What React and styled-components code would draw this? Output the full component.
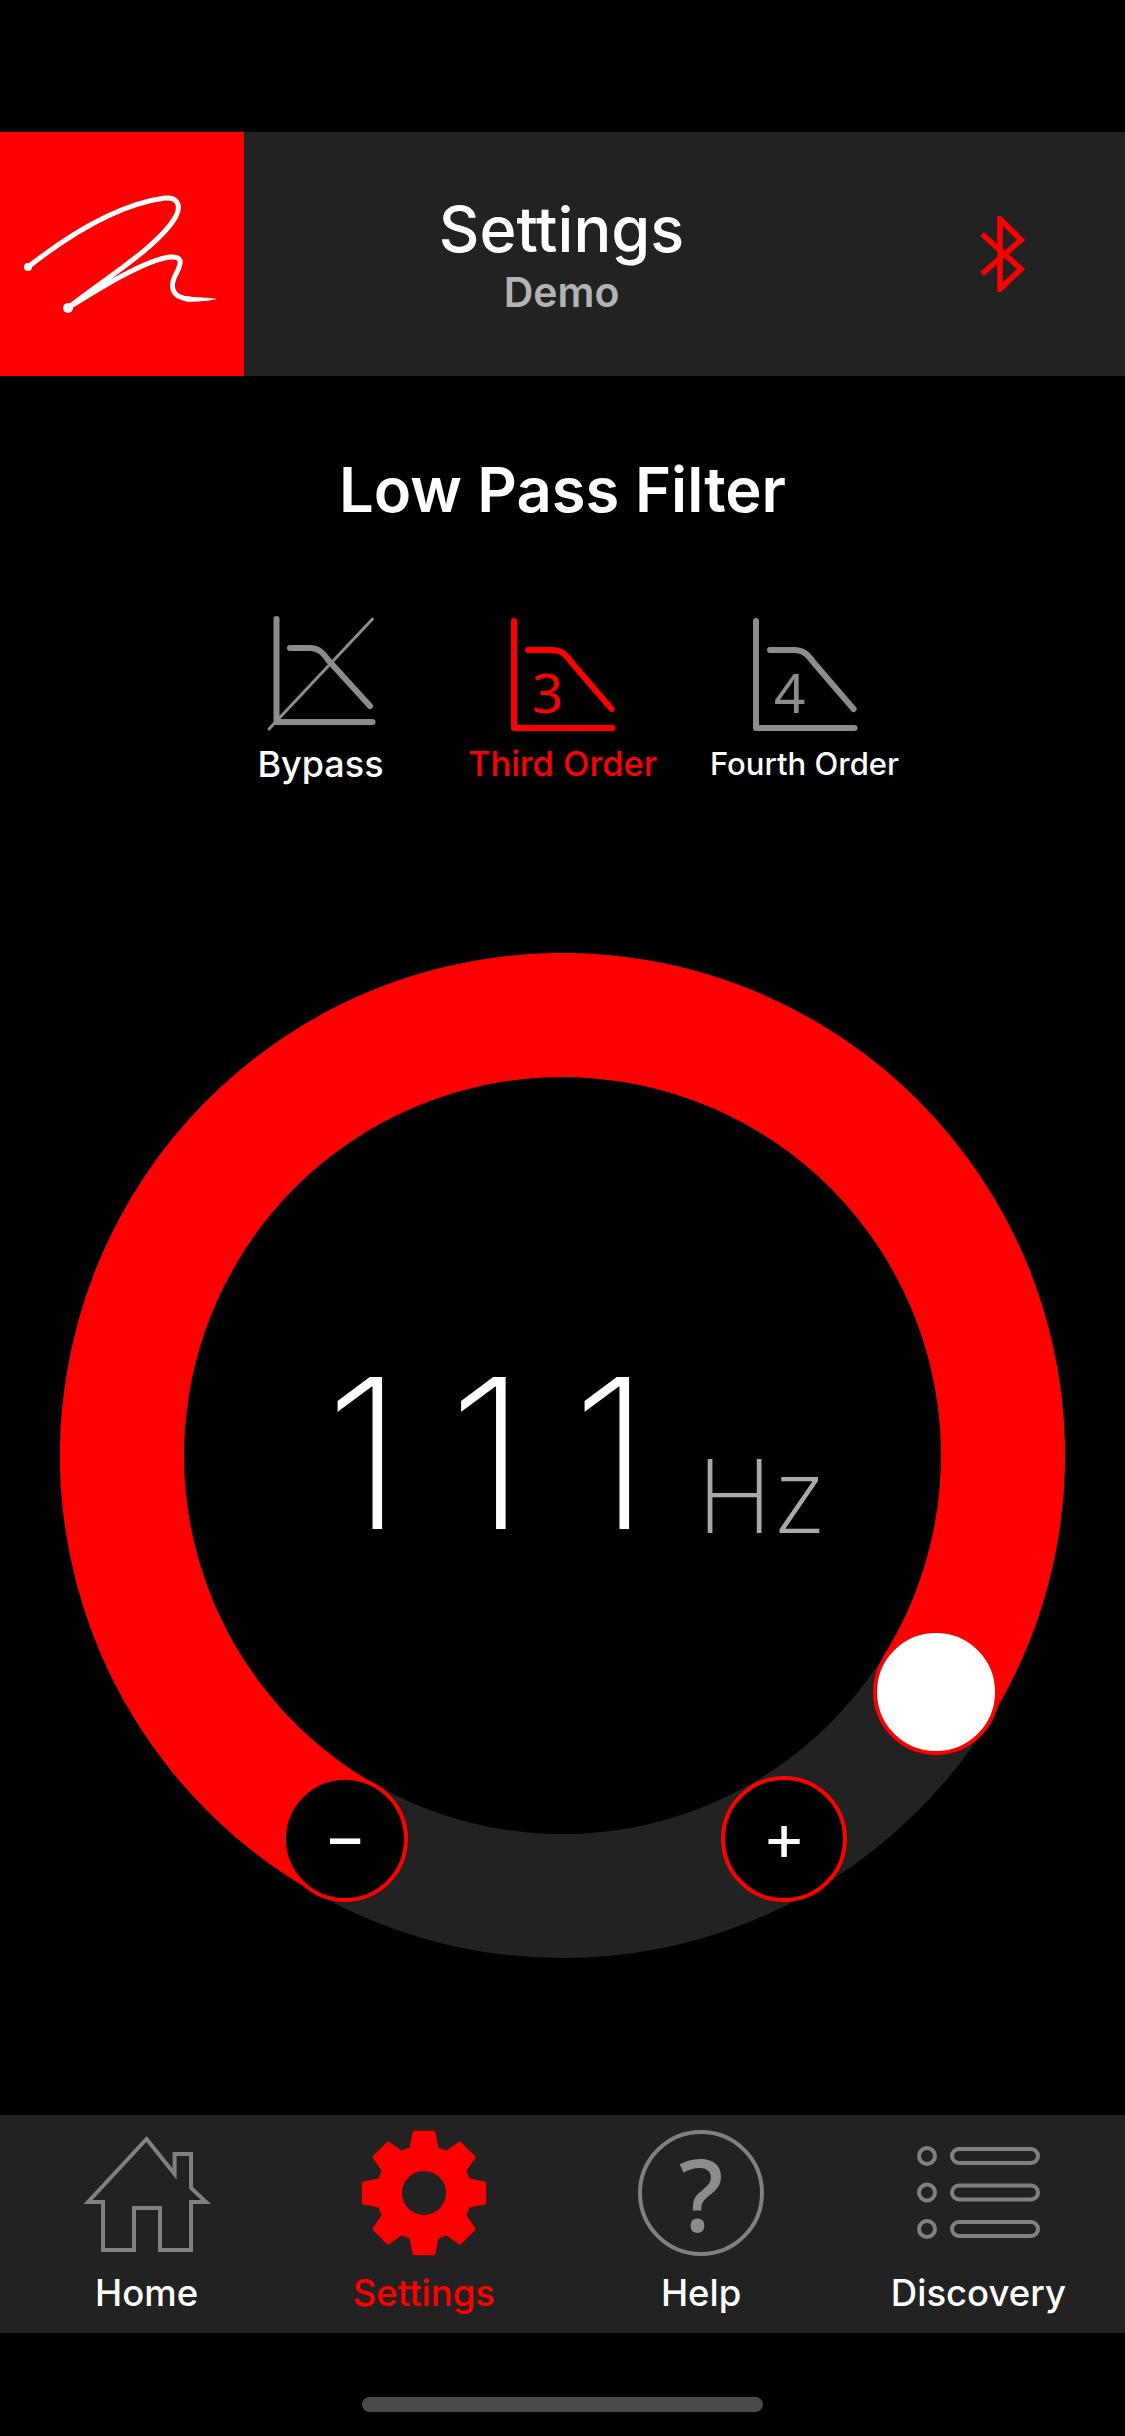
import styled, { createGlobalStyle } from "styled-components";

const RED = "#ff0000";
const BAR = "#222222";
const ICON_GREY = "#8c8c8c";

const GlobalStyle = createGlobalStyle`
  html, body {
    margin: 0;
    background: #000;
  }
  body {
    font-family: Inter, "Liberation Sans", sans-serif;
    color: #fff;
  }
`;

// clockwise from twelve o'clock
const polar = (c, r, deg) => {
  const a = (deg * Math.PI) / 180;
  return [c + r * Math.sin(a), c - r * Math.cos(a)];
};

const arcPath = (c, r, from, to) => {
  const [x1, y1] = polar(c, r, from);
  const [x2, y2] = polar(c, r, to);
  const sweep = (to - from + 360) % 360;
  return `M${x1} ${y1}A${r} ${r} 0 ${sweep > 180 ? 1 : 0} 1 ${x2} ${y2}`;
};

const gearPath = () => {
  const c = 64;
  let d = "";
  for (let i = 0; i < 8; i++) {
    const t = i * 45;
    const pts = [
      polar(c, 46, t - 16),
      polar(c, 61, t - 9),
      polar(c, 61, t + 9),
      polar(c, 46, t + 16),
    ];
    d += pts.map((p, j) => `${i === 0 && j === 0 ? "M" : "L"}${p[0].toFixed(1)} ${p[1].toFixed(1)}`).join("");
  }
  d += "Z";
  d += `M${c - 24} ${c}a24 24 0 1 0 48 0a24 24 0 1 0 -48 0Z`;
  return d;
};

const Page = styled.div`
  width: 1125px;
  height: 2436px;
  display: flex;
  flex-direction: column;
  padding-top: 132px;
  box-sizing: border-box;
  overflow: hidden;
`;

const Header = styled.header`
  height: 244px;
  flex: none;
  display: grid;
  grid-template-columns: 244px 1fr 244px;
  background: ${BAR};
`;

const LogoBox = styled.div`
  background: ${RED};
  display: flex;
`;

const HeaderTitles = styled.div`
  display: flex;
  flex-direction: column;
  align-items: center;
  padding: 62px 2px 0 0;
`;

const HeaderTitle = styled.div`
  font-size: 63px;
  line-height: 70px;
  font-weight: 500;
`;

const HeaderSub = styled.div`
  margin-top: 3px;
  font-size: 41px;
  line-height: 50px;
  font-weight: 600;
  color: #b3b3b3;
`;

const HeaderAction = styled.div`
  display: flex;
  align-items: center;
  padding-left: 99px;
`;

const SectionTitle = styled.h1`
  margin: 78px 0 0;
  font-size: 61.5px;
  line-height: 72px;
  font-weight: 600;
  text-align: center;
`;

const Options = styled.div`
  display: grid;
  grid-template-columns: repeat(3, 242px);
  justify-content: center;
  margin-top: 85px;
`;

const Option = styled.div`
  display: flex;
  flex-direction: column;
  align-items: center;
`;

const OptionLabel = styled.div`
  margin-top: 6px;
  font-size: ${(p) => p.$size}px;
  line-height: 44px;
  font-weight: 500;
  white-space: nowrap;
  color: ${(p) => (p.$active ? RED : "#fff")};
`;

const OrderDigit = styled.text`
  font-family: "Noto Sans", sans-serif;
  font-size: 55px;
`;

const Dial = styled.div`
  position: relative;
  width: 1005px;
  height: 1005px;
  margin: 167px 0 0 60px;
  display: flex;
  align-items: baseline;
  justify-content: center;
  flex: none;
`;

const DialRing = styled.svg`
  position: absolute;
  inset: 0;
`;

const Readout = styled.div`
  position: relative;
  display: flex;
  align-items: baseline;
  padding: 380px 0 0 26px;
`;

const ReadoutValue = styled.span`
  font-size: 209px;
  line-height: 240px;
  font-weight: 250;
  letter-spacing: 44px;
`;

const ReadoutUnit = styled.span`
  margin-left: 2px;
  font-size: 102px;
  font-weight: 250;
  color: #aaaaaa;
  transform: translateY(4px);
`;

const DialButton = styled.div`
  position: absolute;
  left: ${(p) => p.$x}px;
  top: ${(p) => p.$y}px;
  width: 126px;
  height: 126px;
  margin: -63px 0 0 -63px;
  padding-bottom: 6px;
  box-sizing: border-box;
  border: 4px solid ${RED};
  border-radius: 50%;
  background: ${(p) => (p.$knob ? "#fff" : "#000")};
  display: flex;
  align-items: center;
  justify-content: center;
  font-size: 66px;
  font-weight: 400;
  line-height: 1;
`;

const TabBar = styled.nav`
  margin-top: 157px;
  height: 218px;
  flex: none;
  background: ${BAR};
  display: grid;
  grid-template-columns: repeat(4, 1fr);
  padding: 15px 8px 0;
  box-sizing: border-box;
`;

const Tab = styled.div`
  display: flex;
  flex-direction: column;
  align-items: center;
`;

const TabIcon = styled.div`
  height: 126px;
  display: flex;
  align-items: center;
  justify-content: center;
`;

const TabLabel = styled.div`
  margin-top: 15px;
  font-size: 36.5px;
  line-height: 44px;
  font-weight: 500;
  color: ${(p) => (p.$active ? RED : "#fff")};
`;

const HelpRing = styled.div`
  width: 126px;
  height: 126px;
  box-sizing: border-box;
  border: 4px solid #808080;
  border-radius: 50%;
  display: flex;
  align-items: center;
  justify-content: center;
  font-family: "Noto Sans", sans-serif;
  font-size: 100px;
  font-weight: 500;
  line-height: 1;
  color: ${ICON_GREY};
`;

const HomeIndicatorArea = styled.div`
  flex: 1;
  display: flex;
  justify-content: center;
  padding-top: 64px;
`;

const HomeIndicator = styled.div`
  width: 401px;
  height: 15px;
  border-radius: 8px;
  background: #4a4a4a;
`;

const Signature = () => (
  <svg width="244" height="244" viewBox="0 0 244 244" fill="none">
    <path
      d="M28 135C70 102 120 72 165 66C176 65 182 72 176 84C160 114 100 150 68 176C100 156 145 128 170 125C182 124 182 130 177 140C170 152 172 160 178 164C182 166 186 167 190 167"
      stroke="#fff"
      strokeWidth="5"
      strokeLinecap="round"
      strokeLinejoin="round"
    />
    <path d="M186 164.5C198 165 208 165.5 217 167C205 169.5 195 170 186 169.5Z" fill="#fff" />
    <circle cx="28" cy="135" r="4" fill="#fff" />
    <circle cx="68" cy="176" r="5" fill="#fff" />
  </svg>
);

const Bluetooth = () => (
  <svg width="45" height="76" viewBox="0 0 45 76" fill="none">
    <path d="M2 18L41 53L20 73V3L41 24L2 58" stroke={RED} strokeWidth="5.5" />
  </svg>
);

const FilterIcon = ({ color, digit, bypass }) => (
  <svg width="120" height="125" viewBox="0 0 120 125" fill="none">
    {bypass ? (
      <>
        <path
          d="M15.5 8V111H111.5M29 37H49C58 37 62 42 68 50L109 95"
          stroke={color}
          strokeWidth="6"
          strokeLinecap="round"
          strokeLinejoin="round"
        />
        <path d="M8 118L111.5 8" stroke={color} strokeWidth="3" strokeLinecap="round" />
      </>
    ) : (
      <>
        <path
          d="M11 10V117H109.5M25 39H49C59 39 63 44 69 52L108.6 98"
          stroke={color}
          strokeWidth="6"
          strokeLinecap="round"
          strokeLinejoin="round"
        />
        <OrderDigit x="29" y="102" fill={color}>
          {digit}
        </OrderDigit>
      </>
    )}
  </svg>
);

const HomeIcon = () => (
  <svg width="130" height="126" viewBox="0 0 130 126" fill="none">
    <path
      d="M6 72L64.6 9L92.6 44V24H109V58L124 72H109V120H78V78H52V120H21V72Z"
      stroke="#808080"
      strokeWidth="4"
    />
  </svg>
);

const GearIcon = () => (
  <svg width="128" height="128" viewBox="0 0 128 128">
    <path
      d={gearPath()}
      fill={RED}
      fillRule="evenodd"
      stroke={RED}
      strokeWidth="4"
      strokeLinejoin="round"
    />
  </svg>
);

const ListIcon = () => (
  <svg width="130" height="126" viewBox="0 0 130 126" fill="none" stroke="#808080" strokeWidth="4">
    {[26, 62.5, 99].map((y) => (
      <g key={y}>
        <circle cx="14" cy={y} r="8" />
        <rect x="39" y={y - 7} width="86" height="14" rx="7" />
      </g>
    ))}
  </svg>
);

const options = [
  { label: "Bypass", size: 36, color: ICON_GREY, bypass: true },
  { label: "Third Order", size: 34.5, color: RED, digit: "3", active: true },
  { label: "Fourth Order", size: 31, color: ICON_GREY, digit: "4" },
];

const tabs = [
  { label: "Home", icon: <HomeIcon /> },
  { label: "Settings", icon: <GearIcon />, active: true },
  { label: "Help", icon: <HelpRing>?</HelpRing> },
  { label: "Discovery", icon: <ListIcon /> },
];

const App = () => (
  <Page>
    <GlobalStyle />
    <Header>
      <LogoBox>
        <Signature />
      </LogoBox>
      <HeaderTitles>
        <HeaderTitle>Settings</HeaderTitle>
        <HeaderSub>Demo</HeaderSub>
      </HeaderTitles>
      <HeaderAction>
        <Bluetooth />
      </HeaderAction>
    </Header>

    <SectionTitle>Low Pass Filter</SectionTitle>

    <Options>
      {options.map((o) => (
        <Option key={o.label}>
          <FilterIcon color={o.color} digit={o.digit} bypass={o.bypass} />
          <OptionLabel $size={o.size} $active={o.active}>
            {o.label}
          </OptionLabel>
        </Option>
      ))}
    </Options>

    <Dial>
      <DialRing width="1005" height="1005" viewBox="0 0 1005 1005" fill="none">
        <circle cx="502.5" cy="502.5" r="440.5" stroke={BAR} strokeWidth="124" />
        <path d={arcPath(502.5, 440.5, 210, 122.3)} stroke={RED} strokeWidth="124" />
      </DialRing>
      <Readout>
        <ReadoutValue>111</ReadoutValue>
        <ReadoutUnit>Hz</ReadoutUnit>
      </Readout>
      <DialButton $x={285} $y={885.5}>−</DialButton>
      <DialButton $x={724} $y={885.5}>+</DialButton>
      <DialButton $x={876} $y={738.5} $knob />
    </Dial>

    <TabBar>
      {tabs.map((t) => (
        <Tab key={t.label}>
          <TabIcon>{t.icon}</TabIcon>
          <TabLabel $active={t.active}>{t.label}</TabLabel>
        </Tab>
      ))}
    </TabBar>

    <HomeIndicatorArea>
      <HomeIndicator />
    </HomeIndicatorArea>
  </Page>
);

export default App;
